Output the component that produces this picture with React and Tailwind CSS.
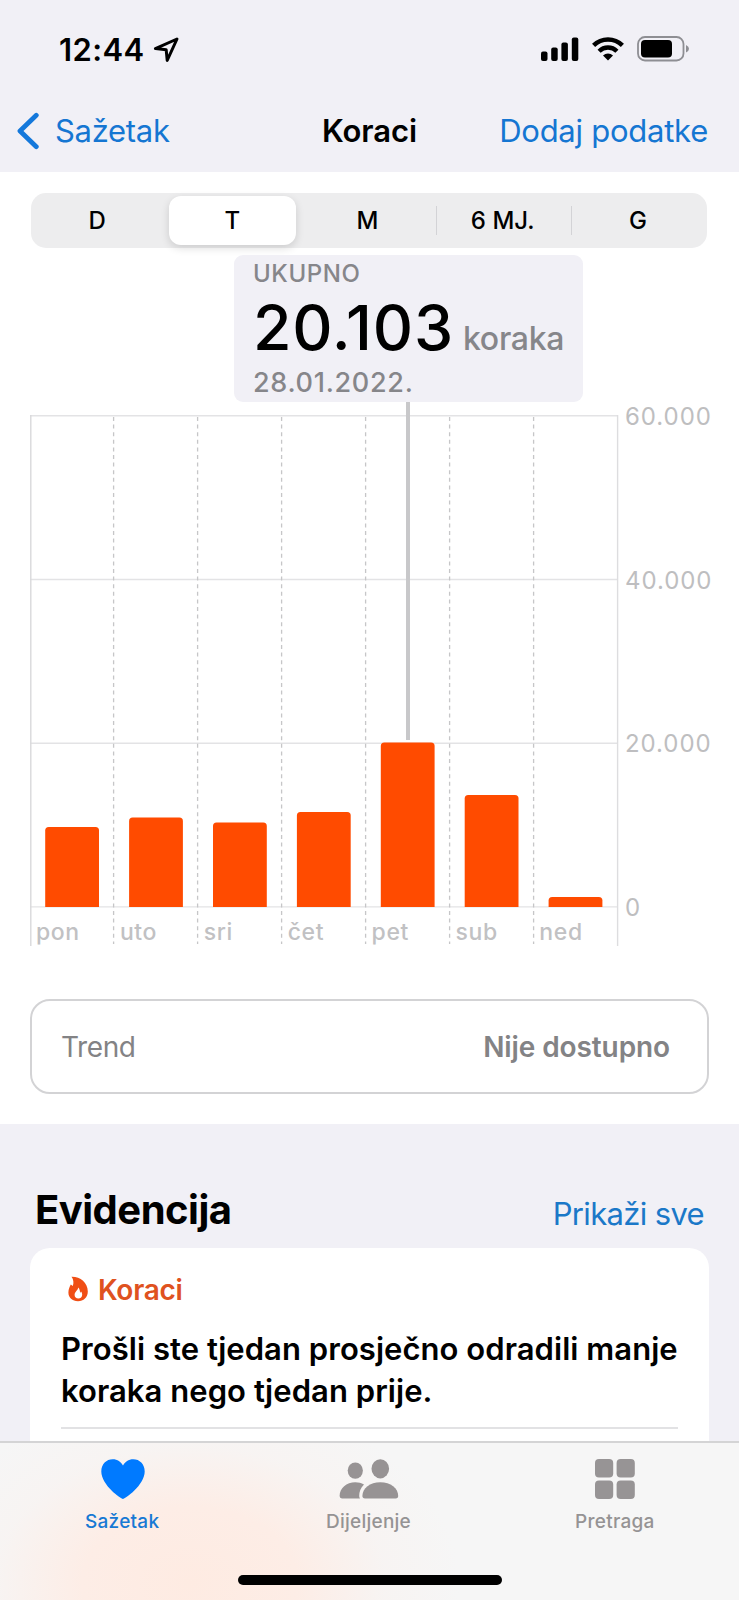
import React, { useState } from 'react';

const ranges = ['D', 'T', 'M', '6 MJ.', 'G'];

const days = [
  { label: 'pon', steps: 9790 },
  { label: 'uto', steps: 10950 },
  { label: 'sri', steps: 10340 },
  { label: 'čet', steps: 11620 },
  { label: 'pet', steps: 20103 },
  { label: 'sub', steps: 13700 },
  { label: 'ned', steps: 1220 },
];

const MAX_STEPS = 60000;
const CHART_HEIGHT = 491;
const COL_WIDTH = 84;

const StatusBar = () => (
  <div className="h-[98px] flex items-center justify-between pl-[59px] pr-[49px]">
    <div className="flex items-center">
      <span className="w-[94px] mt-px text-[31px] leading-8 font-semibold tracking-[0.4px] text-black">12:44</span>
      <svg className="w-[27px] h-[27px]" viewBox="0 0 27 27" fill="none" stroke="#000" strokeWidth="3" strokeLinejoin="round">
        <path d="M24 3 L2.4 12.6 L13.2 13.8 L14.2 24.4 Z" />
      </svg>
    </div>
    <div className="flex items-center">
      <svg className="w-[38px] h-[24px] mr-[13px]" viewBox="0 0 38 24" fill="#000">
        <rect x="0" y="14.5" width="6.5" height="9.5" rx="2" />
        <rect x="10.2" y="10.5" width="6.5" height="13.5" rx="2" />
        <rect x="20.4" y="5.5" width="6.5" height="18.5" rx="2" />
        <rect x="30.8" y="0.5" width="6.5" height="23.5" rx="2" />
      </svg>
      <svg className="w-[32px] h-[24px] mr-[13px]" viewBox="0 0 32 24" fill="none" stroke="#000" strokeWidth="4.4">
        <path d="M1.6 8.4 A20.4 20.4 0 0 1 30.4 8.4" />
        <path d="M7.1 14.2 A12.6 12.6 0 0 1 24.9 14.2" />
        <path d="M16 23.6 L11 18.6 A7.2 7.2 0 0 1 21 18.6 Z" fill="#000" stroke="none" />
      </svg>
      <svg className="w-[53px] h-[26px]" viewBox="0 0 53 26" fill="none">
        <rect x="1" y="1" width="45.5" height="23.5" rx="7" stroke="#8e8e93" strokeWidth="1.8" />
        <rect x="4" y="4" width="31" height="17.5" rx="4" fill="#000" />
        <path d="M49 9 Q52 10.5 52 12.8 Q52 15 49 16.6 Z" fill="#8e8e93" />
      </svg>
    </div>
  </div>
);

const NavBar = () => (
  <div className="h-[66px] grid grid-cols-[1fr_auto_1fr] items-center pl-[16px] pr-[31px] text-[31px] leading-[40px]">
    <div className="flex items-center text-[#1576d2]">
      <svg className="w-[24px] h-[38px] mr-[15px]" viewBox="0 0 24 38" fill="none" stroke="#1478db" strokeWidth="4.8" strokeLinecap="round" strokeLinejoin="round">
        <path d="M20.3 3.3 L4 19 L20.3 34.7" />
      </svg>
      <span className="tracking-[-0.3px]">Sažetak</span>
    </div>
    <span className="ml-[15px] font-semibold tracking-[-0.1px] text-black">Koraci</span>
    <span className="text-right tracking-[-0.25px] text-[#1576d2]">Dodaj podatke</span>
  </div>
);

const RangePicker = ({ value, onChange }) => (
  <div className="ml-[31px] mr-[32px] h-[55px] rounded-[15px] bg-[#ededee] flex">
    {ranges.map((range, i) => (
      <button
        key={range}
        onClick={() => onChange(range)}
        className="relative flex-1 flex items-center justify-center pt-px pr-[3px] text-[24px] leading-8 font-medium text-black"
      >
        {range === value && (
          <span className="absolute left-[3px] right-[5px] inset-y-[3px] rounded-[12px] bg-white shadow-[0_3px_8px_rgba(0,0,0,0.14)]" />
        )}
        {i > 2 && <span className="absolute -left-px top-[13px] w-[1.5px] h-[29px] bg-[#d3d3d6]" />}
        <span className="relative">{range}</span>
      </button>
    ))}
  </div>
);

const Chart = () => (
  <div className="relative mt-[167px] flex h-[531px]">
    <svg className="ml-[30px] w-[589px] h-[531px]" viewBox="0 -1 589 531">
      {[0, 1, 2, 3].map((n) => (
        <line key={n} x1="0" x2="588" y1={n * 163.7 - 0.2} y2={n * 163.7 - 0.2} stroke="#e3e3e5" strokeWidth="1.4" />
      ))}
      <line x1="0.8" x2="0.8" y1="-1" y2="530" stroke="#d9d9db" strokeWidth="1.4" />
      <line x1="587.6" x2="587.6" y1="-1" y2="530" stroke="#dddddf" strokeWidth="1.4" />
      {days.slice(1).map((day, i) => (
        <line
          key={day.label}
          x1={(i + 1) * COL_WIDTH - 0.4}
          x2={(i + 1) * COL_WIDTH - 0.4}
          y1="1"
          y2="528"
          stroke="#c6c6c8"
          strokeWidth="1.3"
          strokeDasharray="4 3.6"
        />
      ))}
      {days.map((day, i) => {
        const h = (day.steps / MAX_STEPS) * CHART_HEIGHT;
        const x = 15.2 + i * 83.9;
        const y = CHART_HEIGHT - h;
        return (
          <path
            key={day.label}
            d={`M${x} ${CHART_HEIGHT} V${y + 3.5} q0 -3.5 3.5 -3.5 h46.8 q3.5 0 3.5 3.5 V${CHART_HEIGHT} Z`}
            fill="#ff4b00"
          />
        );
      })}
    </svg>
    <div className="ml-[6px] h-[523px] -mt-[14px] flex flex-col justify-between text-[24px] leading-8 tracking-[0.95px] text-[#bebec0]">
      {['60.000', '40.000', '20.000', '0'].map((tick) => (
        <span key={tick} className="h-8">{tick}</span>
      ))}
    </div>

    {/* Day labels */}
    <div className="absolute left-[36px] bottom-[-2px] flex text-[23px] leading-8 font-medium tracking-[0.6px] text-[#c1c1c3]">
      {days.map((day) => (
        <span key={day.label} className="w-[83.9px]">{day.label}</span>
      ))}
    </div>

    {/* Selected day */}
    <div className="absolute left-[406px] top-[-13px] w-[4px] h-[338px] bg-[#c8c8ca]" />
    <div className="absolute left-[234px] top-[-160px] w-[349px] h-[147px] rounded-[9px] bg-[#f1f0f6] pl-[19px] pt-[5px] text-[#86868a] whitespace-nowrap">
      <div className="text-[24px] leading-[28px] font-medium tracking-[0.6px]">UKUPNO</div>
      <div className="h-[79px] flex items-baseline">
        <span className="w-[210px] text-[62.5px] leading-[78px] font-medium tracking-[0.8px] text-black">20.103</span>
        <span className="text-[32px] font-medium tracking-[-0.3px]">koraka</span>
      </div>
      <div className="mt-px text-[27px] leading-[30px] font-medium tracking-[0.7px]">28.01.2022.</div>
    </div>
  </div>
);

const Tab = ({ label, active, children }) => (
  <button className="flex-1 flex flex-col items-center pt-[15px]">
    <div className="h-[42px] flex items-center">{children}</div>
    <span className={`mt-[10px] pr-[2px] text-[19px] leading-6 font-medium tracking-[0.25px] ${active ? 'text-[#1779d4]' : 'text-[#959394]'}`}>{label}</span>
  </button>
);

const TabBar = () => (
  <div className="absolute inset-x-0 bottom-0 h-[159px] border-t-2 border-[#d4d4d5] bg-[#f6f6f6] bg-[radial-gradient(ellipse_270px_190px_at_190px_140px,#feebe2_0%,#fdede6_40%,rgba(248,243,241,0.7)_72%,rgba(246,246,246,0)_100%)]">
    <div className="flex">
      <Tab label="Sažetak" active>
        <svg className="w-[44px] h-[40px]" viewBox="0 0 44 40" fill="#007aff">
          <path d="M22 40 C20 40 0.3 26 0.3 12.5 C0.3 5 5.5 0.3 11.7 0.3 C16.5 0.3 20 2.8 22 6.6 C24 2.8 27.5 0.3 32.3 0.3 C38.5 0.3 43.7 5 43.7 12.5 C43.7 26 24 40 22 40 Z" />
        </svg>
      </Tab>
      <Tab label="Dijeljenje">
        <svg className="w-[60px] h-[40px]" viewBox="0 0 60 40" fill="#979394">
          <ellipse cx="16.3" cy="11.6" rx="7.6" ry="8.2" />
          <ellipse cx="41.3" cy="9.8" rx="8.8" ry="9.6" />
          <path d="M21 39.4 H3 Q0.6 39.4 0.6 37 C0.6 29 7.5 23.2 16.3 23.2 C19.5 23.2 22.4 24 25 25.4 C21.5 28.8 20.2 33 20.2 37 Q20.2 38.5 21 39.4 Z" />
          <path d="M26 39.4 Q23.4 39.4 23.4 37 C23.4 29 31 23.2 41.3 23.2 C51.6 23.2 59.2 29 59.2 37 Q59.2 39.4 56.6 39.4 Z" />
        </svg>
      </Tab>
      <Tab label="Pretraga">
        <svg className="w-[40px] h-[40px] mr-px" viewBox="0 0 40 40" fill="#979495">
          <rect x="0" y="0" width="18.2" height="18.4" rx="4" />
          <rect x="21.6" y="0" width="18.2" height="18.4" rx="4" />
          <rect x="0" y="21.6" width="18.2" height="18.4" rx="4" />
          <rect x="21.6" y="21.6" width="18.2" height="18.4" rx="4" />
        </svg>
      </Tab>
    </div>
    <div className="absolute left-[238px] bottom-[15px] w-[264px] h-[10px] rounded-full bg-black" />
  </div>
);

const App = () => {
  const [range, setRange] = useState('T');

  return (
    <div className="relative w-[739px] h-[1600px] overflow-hidden bg-[#f1f0f6] font-['Inter',sans-serif]">
      <div className="h-[172px]">
        <StatusBar />
        <NavBar />
      </div>

      <div className="h-[952px] bg-white pt-[21px]">
        <RangePicker value={range} onChange={setRange} />
        <Chart />
        {/* Trend */}
        <div className="mx-[30px] mt-[53px] h-[95px] rounded-[20px] border-2 border-[#d3d3d5] flex items-center justify-between pl-[29px] pr-[37px] text-[28px] text-[#838385]">
          <span className="tracking-[-0.4px]">Trend</span>
          <span className="font-semibold tracking-[-0.1px]">Nije dostupno</span>
        </div>
      </div>

      <div className="h-[124px] pt-[66px] pl-[35px] pr-[35px] flex items-start justify-between">
        <h2 className="text-[40px] leading-[40px] font-bold tracking-[-0.5px] text-black">Evidencija</h2>
        <span className="mt-[4px] text-[31px] leading-[40px] tracking-[-0.65px] text-[#1b78c8]">Prikaži sve</span>
      </div>

      <div className="mx-[30px] h-[400px] rounded-[20px] bg-white px-[31px] pt-[25px]">
        <div className="flex items-center h-[32px] pl-[6px] text-[#df5220]">
          <svg className="w-[22px] h-[26px] mr-[9px]" viewBox="0 0 22 26" fill="#f04e14">
            <path fillRule="evenodd" d="M4.5 0.8 C13 0.5 20.8 6.5 20.8 15.5 C20.8 21.5 16.5 25.2 11 25.2 C5.4 25.2 1.4 21.8 1.4 16.5 C1.4 13 2.8 10.6 3.8 8.6 L5.8 10 C7 7 6.5 3.2 4.5 0.8 Z M11.2 11.5 C11 14.5 7.6 15.6 7.6 19 C7.6 21.2 9.2 22.6 11.3 22.6 C13.6 22.6 15.2 21.1 15.2 18.8 C15.2 17.4 14.6 16.3 14 15.6 L13 17 C13.2 14.8 12.5 12.8 11.2 11.5 Z" />
          </svg>
          <span className="mt-px text-[28px] leading-8 font-semibold tracking-[-0.25px]">Koraci</span>
        </div>
        <p className="mt-[23px] text-[31px] leading-[41.5px] font-semibold tracking-[0.05px] text-black whitespace-nowrap">
          Prošli ste tjedan prosječno odradili manje<br />
          koraka nego tjedan prije.
        </p>
        <div className="mt-[16px] h-[2px] bg-[#e2e2e4]" />
      </div>

      <TabBar />
    </div>
  );
};

export default App;
